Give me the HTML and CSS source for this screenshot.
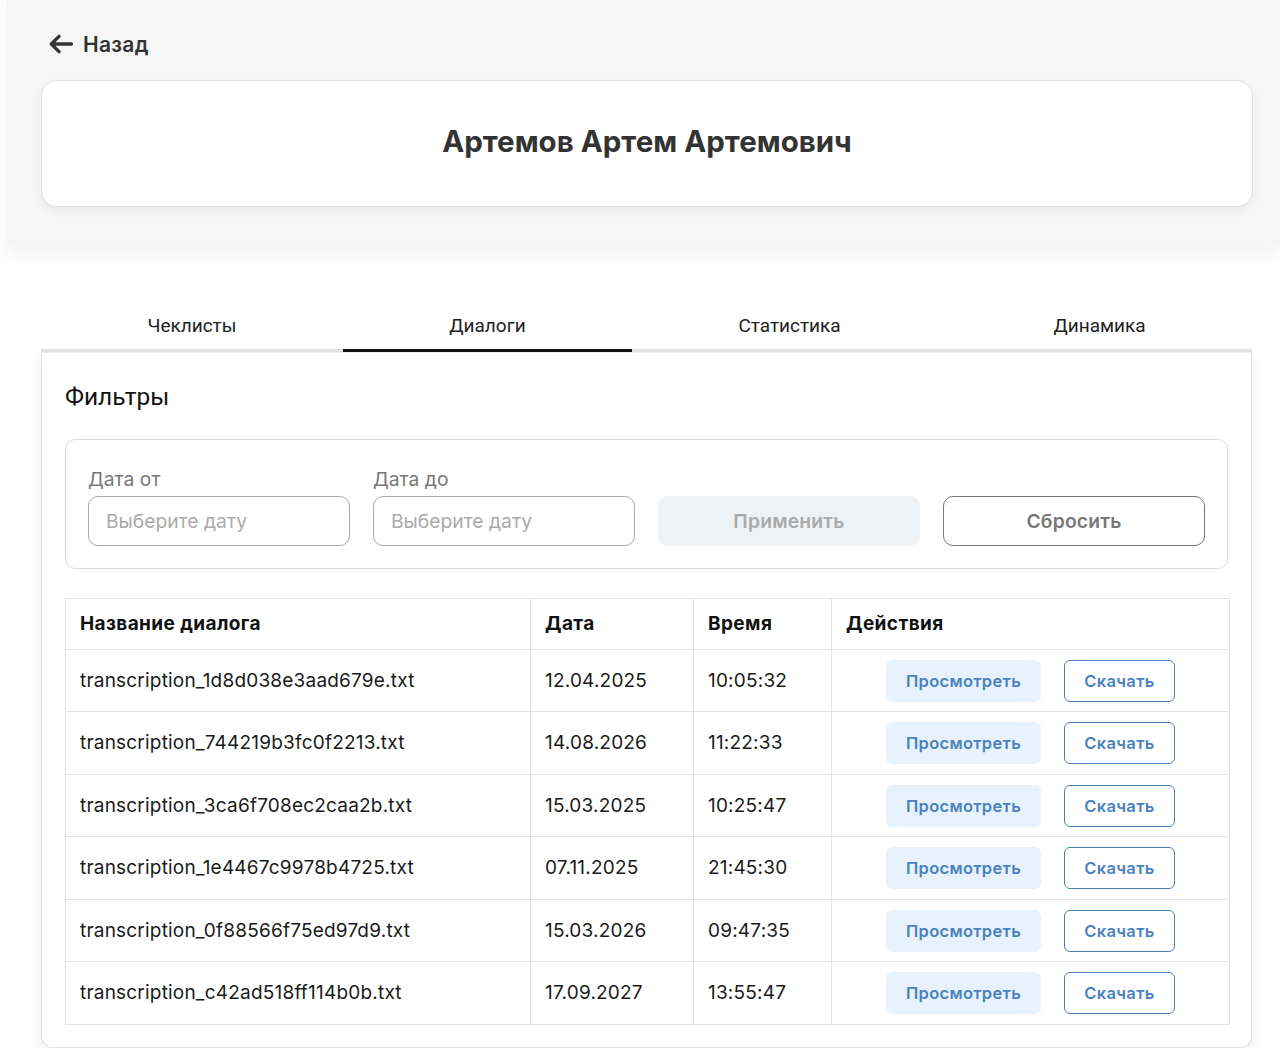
FILE: index.html
```html
<!DOCTYPE html>
<html lang="ru">
<head>
<meta charset="utf-8">
<title>Диалоги</title>
<link rel="stylesheet" href="styles.css">
</head>
<body>
<div class="page">
  <header class="top">
    <a class="back" href="#">
      <svg class="back-icon" width="24" height="24" viewBox="0 0 24 24" aria-hidden="true"><path d="M22.5 12H2.5M10 4.3L2.3 12l7.7 7.7" fill="none" stroke="#333" stroke-width="3.3" stroke-linecap="round" stroke-linejoin="round"/></svg>
      <span>Назад</span>
    </a>
    <div class="name-card">
      <h1 class="name">Артемов Артем Артемович</h1>
    </div>
  </header>

  <nav class="tabs">
    <div class="tab">Чеклисты</div>
    <div class="tab active">Диалоги</div>
    <div class="tab">Статистика</div>
    <div class="tab">Динамика</div>
  </nav>

  <section class="panel">
    <h2 class="panel-title">Фильтры</h2>
    <div class="filters">
      <div class="field">
        <label class="field-label">Дата от</label>
        <div class="input">Выберите дату</div>
      </div>
      <div class="field">
        <label class="field-label">Дата до</label>
        <div class="input">Выберите дату</div>
      </div>
      <div class="field">
        <button class="btn-apply">Применить</button>
      </div>
      <div class="field">
        <button class="btn-reset">Сбросить</button>
      </div>
    </div>

    <table class="table">
      <colgroup>
        <col class="c1"><col class="c2"><col class="c3"><col class="c4">
      </colgroup>
      <thead>
        <tr><th>Название диалога</th><th>Дата</th><th>Время</th><th>Действия</th></tr>
      </thead>
      <tbody>
        <tr><td>transcription_1d8d038e3aad679e.txt</td><td>12.04.2025</td><td>10:05:32</td><td><div class="actions"><button class="btn-view">Просмотреть</button><button class="btn-dl">Скачать</button></div></td></tr>
        <tr><td>transcription_744219b3fc0f2213.txt</td><td>14.08.2026</td><td>11:22:33</td><td><div class="actions"><button class="btn-view">Просмотреть</button><button class="btn-dl">Скачать</button></div></td></tr>
        <tr><td>transcription_3ca6f708ec2caa2b.txt</td><td>15.03.2025</td><td>10:25:47</td><td><div class="actions"><button class="btn-view">Просмотреть</button><button class="btn-dl">Скачать</button></div></td></tr>
        <tr><td>transcription_1e4467c9978b4725.txt</td><td>07.11.2025</td><td>21:45:30</td><td><div class="actions"><button class="btn-view">Просмотреть</button><button class="btn-dl">Скачать</button></div></td></tr>
        <tr><td>transcription_0f88566f75ed97d9.txt</td><td>15.03.2026</td><td>09:47:35</td><td><div class="actions"><button class="btn-view">Просмотреть</button><button class="btn-dl">Скачать</button></div></td></tr>
        <tr><td>transcription_c42ad518ff114b0b.txt</td><td>17.09.2027</td><td>13:55:47</td><td><div class="actions"><button class="btn-view">Просмотреть</button><button class="btn-dl">Скачать</button></div></td></tr>
      </tbody>
    </table>
  </section>
</div>
</body>
</html>
```

FILE: styles.css
```css
* { box-sizing: border-box; }
html, body { margin: 0; padding: 0; background: #fff; }
body {
  font-family: "Inter", "Noto Sans", sans-serif;
  color: #222;
  overflow: hidden;
}
.page { width: 1280px; }

.top {
  margin-left: 6px;
  background: #f6f6f6;
  padding: 30px 27px 0 35px;
  box-shadow: 0 10px 18px rgba(0,0,0,0.05);
  height: 245px;
}
.back {
  display: flex;
  width: fit-content;
  align-items: center;
  gap: 10px;
  text-decoration: none;
  color: #333;
  font-size: 21px;
  font-weight: 600;
  letter-spacing: 0.3px;
  margin-left: 8px;
  height: 28px;
}
.back-icon { display: block; }
.name-card {
  margin-top: 22px;
  background: #fff;
  border: 1px solid #e2e2e2;
  border-radius: 16px;
  height: 127px;
  padding-bottom: 6px;
  display: flex;
  align-items: center;
  justify-content: center;
  box-shadow: 0 4px 10px rgba(0,0,0,0.06);
}
.name {
  margin: 0;
  font-size: 29.5px;
  font-weight: 700;
  color: #333;
  letter-spacing: 0;
}

.tabs {
  display: flex;
  margin: 55px 28px 0 41px;
  border-bottom: 3px solid #e3e3e3;
}
.tab {
  flex: 1 1 auto;
  text-align: center;
  font-family: "Roboto", sans-serif;
  font-size: 19px;
  color: #222;
  padding: 14px 0 11px;
  line-height: 24px;
  margin-bottom: -3px;
  border-bottom: 3px solid transparent;
}
.tab.active { border-bottom-color: #111; }

.panel {
  margin: 0 28px 0 41px;
  background: #fff;
  border: 1px solid #e3e3e3;
  border-top-color: #eee;
  border-radius: 0 0 12px 12px;
  padding: 28px 23px 22px 23px;
  box-shadow: 0 6px 14px rgba(0,0,0,0.07);
}
.panel-title {
  margin: 0 0 27px;
  font-family: "Roboto", sans-serif;
  font-weight: 400;
  font-size: 24.5px;
  line-height: 31px;
  color: #111;
}

.filters {
  display: grid;
  grid-template-columns: repeat(4, 1fr);
  gap: 23px;
  align-items: end;
  border: 1.5px solid #dcdcdc;
  border-radius: 10px;
  padding: 27px 22px 22px 22px;
}
.field { display: flex; flex-direction: column; }
.field-label {
  font-size: 19.3px;
  line-height: 24px;
  color: #777;
  margin-bottom: 5px;
}
.input {
  height: 49.5px;
  border: 1.5px solid #aaa;
  border-radius: 10px;
  padding: 0 17px;
  display: flex;
  align-items: center;
  font-size: 19.3px;
  color: #aaa;
}
.btn-apply, .btn-reset {
  height: 49.5px;
  border-radius: 10px;
  font-family: inherit;
  font-size: 19.3px;
  font-weight: 600;
  letter-spacing: 0.2px;
}
.btn-apply {
  background: #eef2f4;
  border: none;
  color: #aaa;
}
.btn-reset {
  background: #fff;
  border: 1.5px solid #777;
  color: #777;
}

.table {
  margin-top: 29px;
  width: 100%;
  border-collapse: collapse;
  table-layout: fixed;
  border: 1.5px solid #e3e3e3;
}
.c1 { width: 465px; }
.c2 { width: 163px; }
.c3 { width: 138px; }
.c4 { width: 398px; }
.table th, .table td {
  border: 1px solid #e3e3e3;
  text-align: left;
  font-size: 19px;
  line-height: 22px;
  padding: 1px 14px 0;
}
.table th {
  height: 51px;
  font-weight: 700;
  color: #111;
  letter-spacing: 0.4px;
}
.table td {
  height: 62.5px;
  color: #1a1a1a;
  letter-spacing: 0.2px;
}
.table td .actions { letter-spacing: 0; }
.actions {
  display: flex;
  justify-content: center;
  gap: 23px;
}
.btn-view, .btn-dl {
  height: 42px;
  border-radius: 6px;
  font-family: inherit;
  font-size: 16.5px;
  font-weight: 600;
  color: #4a82bf;
  letter-spacing: 0.3px;
}
.btn-view {
  width: 155px;
  background: #e8f2fc;
  border: none;
}
.btn-dl {
  width: 111px;
  background: #fff;
  border: 1.5px solid #4a7fb5;
}
```
